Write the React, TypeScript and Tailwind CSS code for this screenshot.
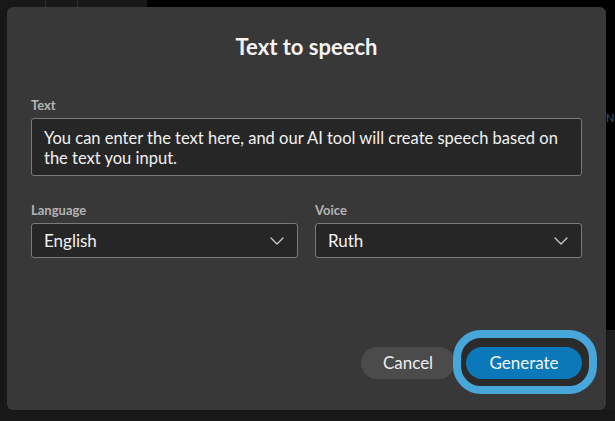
import React from "react";

function Chevron() {
  return (
    <svg width="14" height="8" viewBox="0 0 14 8" fill="none" className="shrink-0">
      <path d="M1 1l6 6 6-6" stroke="#d0d0d0" strokeWidth="1.2" strokeLinecap="round" strokeLinejoin="round" />
    </svg>
  );
}

function Select({ label, value }: { label: string; value: string }) {
  return (
    <div className="flex flex-col">
      <div className="text-[13px] leading-4 font-bold text-[#b4b4b4] mb-[5px]">{label}</div>
      <div className="h-[35px] flex items-center justify-between pl-[12px] pr-[13px] rounded-[3px] border border-[#7a7a7a] bg-[#262626] text-[17px] text-[#f2f2f2]">
        <span>{value}</span>
        <Chevron />
      </div>
    </div>
  );
}

export default function App() {
  return (
    <div
      className="relative w-[615px] h-[421px] overflow-hidden bg-[#181818]"
      style={{ fontFamily: "Lato, 'Noto Sans', sans-serif" }}
    >
      {/* background content behind the dialog */}
      <div className="absolute top-0 left-[147px] right-0 h-[330px] bg-black" />
      <div className="absolute top-0 left-[45px] w-px h-[7px] bg-[#2a2a2a]" />
      <div className="absolute top-0 left-[77px] w-px h-[7px] bg-[#2a2a2a]" />
      <div className="absolute top-[330px] right-0 w-[8px] h-[81px] bg-[#1c1c1c]" />
      <div className="absolute top-[112px] left-[606px] text-[11px] leading-none text-[#3a5a74]">N</div>

      <div className="absolute left-[7px] top-[7px] w-[599px] h-[403px] rounded-[6px] bg-[#383838] flex flex-col px-[24px] pt-[27px] pb-[31px]">
        <h1 className="text-center text-[22px] leading-[26px] font-bold text-[#f4f4f4]">Text to speech</h1>

        <div className="mt-[37px] text-[13px] leading-4 font-bold text-[#b4b4b4] mb-[5px]">Text</div>
        <div className="h-[58px] rounded-[3px] border border-[#7a7a7a] bg-[#262626] pl-[12px] pr-[12px] pt-[9px] text-[16.5px] leading-[20px] text-[#f2f2f2]">
          You can enter the text here, and our AI tool will create speech based on the text you input.
        </div>

        <div className="mt-[26px] grid grid-cols-2 gap-[17px]">
          <Select label="Language" value="English" />
          <Select label="Voice" value="Ruth" />
        </div>

        <div className="mt-auto flex justify-end items-center gap-[11px]">
          <button className="h-[32px] w-[94px] rounded-full bg-[#4b4b4b] text-[17px] text-[#ededed]">
            Cancel
          </button>
          <div className="relative">
            <span className="absolute top-[-17px] bottom-[-15px] left-[-13px] right-[-15px] rounded-[28px] border-[8px] border-[#47a6da] bg-[#2b2b2b]" />
            <button className="relative h-[32px] w-[116px] rounded-full bg-[#0b79b9] text-[17px] text-[#f4f4f4]">
              Generate
            </button>
          </div>
        </div>
      </div>
    </div>
  );
}
